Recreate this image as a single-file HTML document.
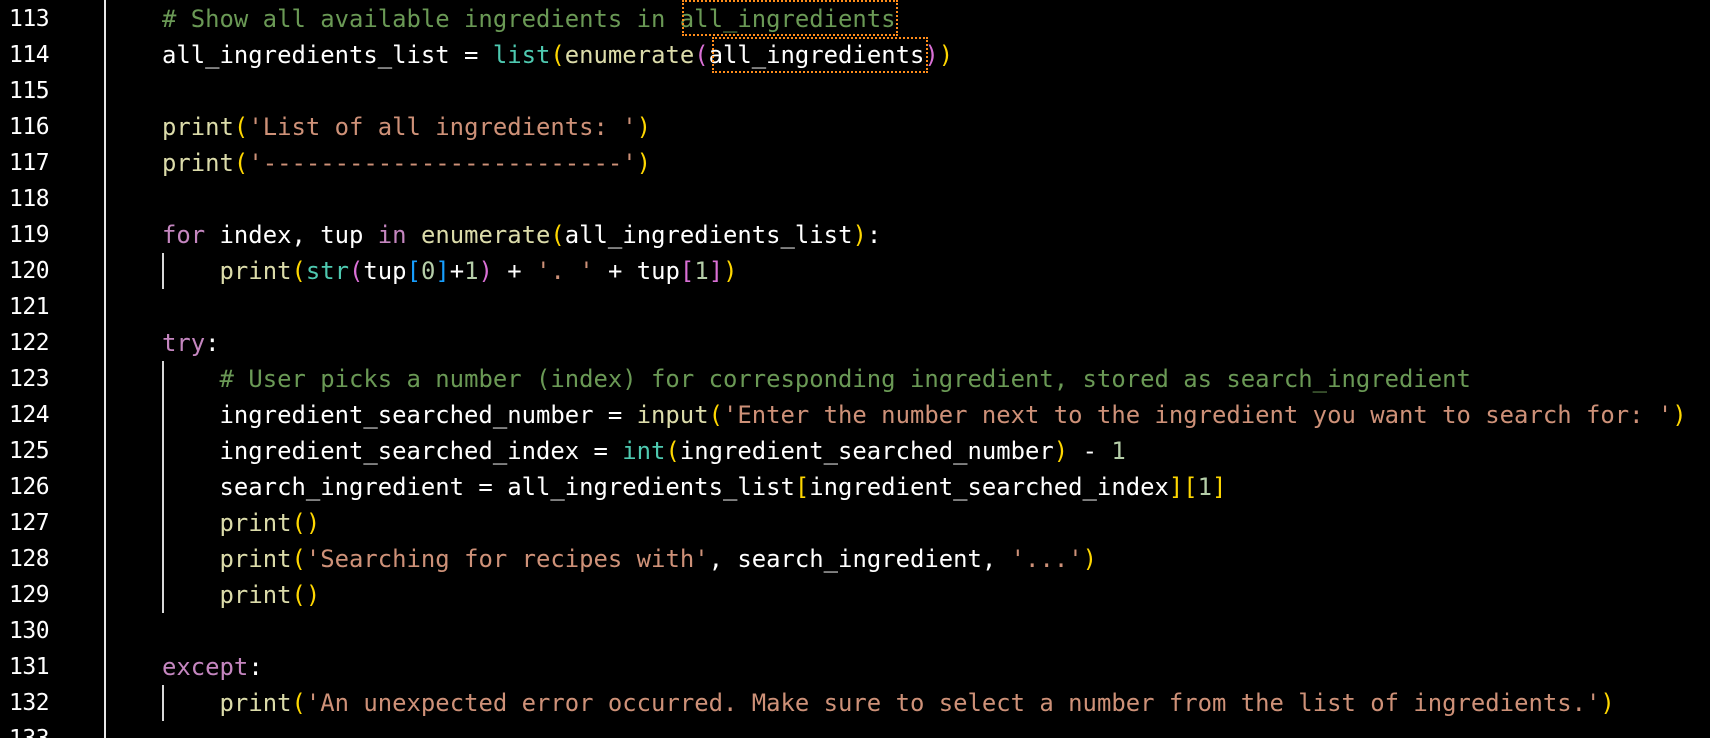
<!DOCTYPE html>
<html><head><meta charset="utf-8"><style>
html,body{margin:0;padding:0;background:#000;width:1710px;height:738px;overflow:hidden}
body{position:relative;font-family:"DejaVu Sans Mono","Liberation Mono",monospace;font-size:23.9px}
.ln{position:absolute;left:0;width:80px;color:#fff;height:36px;line-height:36px;padding-left:9px;font-family:"DejaVu Sans Mono","Liberation Mono",monospace;font-size:23px;font-weight:normal;letter-spacing:-0.5px}
.gut{position:absolute;left:104px;top:0;width:2px;height:738px;background:#e8e8e8}
.c{position:absolute;left:162px;height:36px;line-height:36px;white-space:pre;color:#fff;letter-spacing:0px}
.g{position:absolute;left:162px;width:2px;height:36px;background:#d8d8d8}
.cm{color:#6A9955}.kw{color:#C586C0}.fn{color:#DCDCAA}.st{color:#CE9178}.bi{color:#4EC9B0}.nu{color:#B5CEA8}
.b1{color:#FFD700}.b2{color:#DA70D6}.b3{color:#179FFF}
.box{position:absolute;border:2px dotted #ff8c1a}
</style></head><body>
<div class="gut"></div>
<div class="ln" style="top:1px">113</div>
<div class="ln" style="top:37px">114</div>
<div class="ln" style="top:73px">115</div>
<div class="ln" style="top:109px">116</div>
<div class="ln" style="top:145px">117</div>
<div class="ln" style="top:181px">118</div>
<div class="ln" style="top:217px">119</div>
<div class="ln" style="top:253px">120</div>
<div class="ln" style="top:289px">121</div>
<div class="ln" style="top:325px">122</div>
<div class="ln" style="top:361px">123</div>
<div class="ln" style="top:397px">124</div>
<div class="ln" style="top:433px">125</div>
<div class="ln" style="top:469px">126</div>
<div class="ln" style="top:505px">127</div>
<div class="ln" style="top:541px">128</div>
<div class="ln" style="top:577px">129</div>
<div class="ln" style="top:613px">130</div>
<div class="ln" style="top:649px">131</div>
<div class="ln" style="top:685px">132</div>
<div class="ln" style="top:721px">133</div>

<div class="c" style="top:1px"><span class="cm"># Show all available ingredients in all_ingredients</span></div>
<div class="c" style="top:37px">all_ingredients_list = <span class="bi">list</span><span class="b1">(</span><span class="fn">enumerate</span><span class="b2">(</span>all_ingredients<span class="b2">)</span><span class="b1">)</span></div>
<div class="c" style="top:109px"><span class="fn">print</span><span class="b1">(</span><span class="st">'List of all ingredients: '</span><span class="b1">)</span></div>
<div class="c" style="top:145px"><span class="fn">print</span><span class="b1">(</span><span class="st">'-------------------------'</span><span class="b1">)</span></div>
<div class="c" style="top:217px"><span class="kw">for</span> index, tup <span class="kw">in</span> <span class="fn">enumerate</span><span class="b1">(</span>all_ingredients_list<span class="b1">)</span>:</div>
<div class="g" style="top:253px"></div>
<div class="c" style="top:253px">    <span class="fn">print</span><span class="b1">(</span><span class="bi">str</span><span class="b2">(</span>tup<span class="b3">[</span><span class="nu">0</span><span class="b3">]</span>+<span class="nu">1</span><span class="b2">)</span> + <span class="st">'. '</span> + tup<span class="b2">[</span><span class="nu">1</span><span class="b2">]</span><span class="b1">)</span></div>
<div class="c" style="top:325px"><span class="kw">try</span>:</div>
<div class="g" style="top:361px;height:252px"></div>
<div class="c" style="top:361px">    <span class="cm"># User picks a number (index) for corresponding ingredient, stored as search_ingredient</span></div>
<div class="c" style="top:397px">    ingredient_searched_number = <span class="fn">input</span><span class="b1">(</span><span class="st">'Enter the number next to the ingredient you want to search for: '</span><span class="b1">)</span></div>
<div class="c" style="top:433px">    ingredient_searched_index = <span class="bi">int</span><span class="b1">(</span>ingredient_searched_number<span class="b1">)</span> - <span class="nu">1</span></div>
<div class="c" style="top:469px">    search_ingredient = all_ingredients_list<span class="b1">[</span>ingredient_searched_index<span class="b1">][</span><span class="nu">1</span><span class="b1">]</span></div>
<div class="c" style="top:505px">    <span class="fn">print</span><span class="b1">()</span></div>
<div class="c" style="top:541px">    <span class="fn">print</span><span class="b1">(</span><span class="st">'Searching for recipes with'</span>, search_ingredient, <span class="st">'...'</span><span class="b1">)</span></div>
<div class="c" style="top:577px">    <span class="fn">print</span><span class="b1">()</span></div>
<div class="c" style="top:649px"><span class="kw">except</span>:</div>
<div class="g" style="top:685px"></div>
<div class="c" style="top:685px">    <span class="fn">print</span><span class="b1">(</span><span class="st">'An unexpected error occurred. Make sure to select a number from the list of ingredients.'</span><span class="b1">)</span></div>

<div class="box" style="left:682px;top:0px;width:212px;height:32px"></div>
<div class="box" style="left:712px;top:37px;width:212px;height:32px"></div>
</body></html>
